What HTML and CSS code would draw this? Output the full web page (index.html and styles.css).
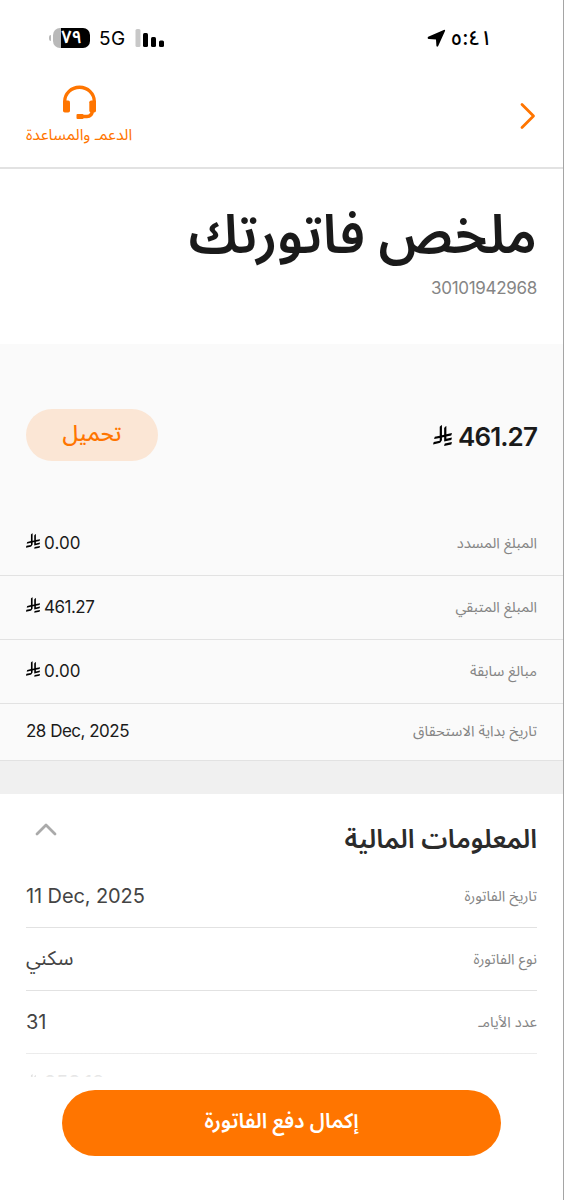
FILE: index.html
```html
<!DOCTYPE html>
<html lang="ar" dir="rtl">
<head>
    <meta charset="UTF-8">
    <meta name="viewport" content="width=device-width, initial-scale=1.0">
    <title>ملخص فاتورتك</title>
    <link rel="stylesheet" href="styles.css">
</head>
<body>
    <svg class="defs" width="0" height="0">
        <symbol id="riyal" viewBox="0 0 1124.14 1256.39">
            <path d="M699.62,1113.02c-20.06,44.48-33.32,92.75-38.4,143.37l424.51-90.24c20.06-44.47,33.31-92.75,38.4-143.37l-424.51,90.24Z"/>
            <path d="M1085.73,895.8c20.06-44.47,33.32-92.75,38.4-143.37l-330.68,70.33v-135.2l292.27-62.11c20.06-44.47,33.32-92.75,38.4-143.37l-330.68,70.27V66.13c-50.67,28.45-95.67,66.32-132.25,110.99v403.35l-132.25,28.11V0c-50.67,28.44-95.67,66.32-132.25,110.99v525.69l-295.91,62.88c-20.06,44.47-33.33,92.75-38.42,143.37l334.33-71.05v170.26l-358.3,76.14c-20.06,44.47-33.32,92.75-38.4,143.37l375.04-79.7c30.53-6.35,56.77-24.4,73.83-49.24l68.78-101.97v-.02c7.14-10.55,11.3-23.27,11.3-36.97v-149.98l132.25-28.11v270.4l424.53-90.28Z"/>
        </symbol>
    </svg>
    <div class="phone">
        <div class="status d-flex align-items-center justify-content-between">
            <div class="clock d-flex align-items-center">
                <span class="time">٥:٤١</span>
                <svg class="location" width="19" height="19" viewBox="0 0 19 19"><path d="M1.200 7.800 16.800 1q1.700-.6 1.200 1.100L11.200 17q-1.200 1.800-1.800-.3L9 10.400 2 10q-2.200-.6-.8-2.200z"/></svg>
            </div>
            <div class="signals d-flex align-items-center">
                <svg class="bars" width="30" height="20" viewBox="0 0 30 20">
                    <rect class="off" x="0.500" y="1" width="5" height="18" rx="1.500"/>
                    <rect x="8" y="5" width="5" height="14" rx="1.500"/>
                    <rect x="16" y="9" width="5" height="10" rx="1.500"/>
                    <rect x="24" y="12.500" width="5" height="6.500" rx="1.500"/>
                </svg>
                <span class="network">5G</span>
                <div class="battery-wrap d-flex align-items-center">
                    <span class="battery">٧٩</span>
                    <span class="battery-tip"></span>
                </div>
            </div>
        </div>
        <header class="topbar d-flex justify-content-between">
            <svg class="back" width="16" height="28" viewBox="0 0 16 28"><path d="M2 2.500 13.500 14 2 25.500"/></svg>
            <a class="support">
                <svg width="35" height="35" viewBox="0 0 35 35">
                    <path class="line" d="M2.700 18v-1.500a14.800 14.300 0 0 1 29.600 0V18"/>
                    <rect x="1" y="15.500" width="7" height="12" rx="1.800"/>
                    <rect x="27.300" y="15.500" width="6.700" height="12" rx="1.800"/>
                    <path class="line" d="M30.500 25.500q-.6 6-5.500 6h-5"/>
                    <rect x="14.500" y="29" width="7" height="5" rx="1"/>
                </svg>
                <span>الدعمـ والمساعدة</span>
            </a>
        </header>
        <section class="hero">
            <h1>ملخص فاتورتك</h1>
            <p class="account">30101942968</p>
        </section>
        <section class="summary">
            <div class="total d-flex align-items-center justify-content-between">
                <div class="amount"><svg><use href="#riyal"/></svg>461.27</div>
                <a class="download">تحميل</a>
            </div>
            <div class="item">
                <span class="label">المبلغ المسدد</span>
                <span class="value value-zero"><svg><use href="#riyal"/></svg>0.00</span>
            </div>
            <div class="item">
                <span class="label">المبلغ المتبقي</span>
                <span class="value"><svg><use href="#riyal"/></svg>461.27</span>
            </div>
            <div class="item">
                <span class="label">مبالغ سابقة</span>
                <span class="value value-zero"><svg><use href="#riyal"/></svg>0.00</span>
            </div>
            <div class="item item-date">
                <span class="label">تاريخ بداية الاستحقاق</span>
                <span class="value">28 Dec, 2025</span>
            </div>
        </section>
        <section class="details">
            <div class="details-title d-flex justify-content-between">
                <h2>المعلومات المالية</h2>
                <svg class="collapse" width="22" height="14" viewBox="0 0 22 14"><path d="M2 12 11 3l9 9"/></svg>
            </div>
            <div class="row">
                <span class="label">تاريخ الفاتورة</span>
                <span class="value">11 Dec, 2025</span>
            </div>
            <div class="row">
                <span class="label">نوع الفاتورة</span>
                <span class="value">سكني</span>
            </div>
            <div class="row">
                <span class="label">عدد الأيامـ</span>
                <span class="value">31</span>
            </div>
            <div class="row row-last">
                <span class="label"></span>
                <span class="value"><svg><use href="#riyal"/></svg>253.18</span>
            </div>
        </section>
        <footer class="pay-bar">
            <a class="pay">إكمال دفع الفاتورة</a>
        </footer>
    </div>
</body>
</html>
```
FILE: styles.css
```css
*{
    box-sizing: border-box;
    margin: 0px;
    padding: 0px;
}
.d-flex{
    display: flex;
}
.align-items-center{
    align-items: center;
}
.justify-content-between{
    justify-content: space-between;
}
body{
    font-family: Inter, "Noto Sans Arabic", "DejaVu Sans", sans-serif;
    background: #fff;
    color: #1a1a1a;
}
.defs{
    position: absolute;
}
.phone{
    position: relative;
    width: 564px;
    height: 1200px;
    overflow: hidden;
    border-right: 1px solid #a5a5a5;
}
.status{
    height: 76px;
    padding: 0 71px 0 49px;
    color: #000;
}
.clock{
    gap: 5px;
}
.time{
    font-size: 20.500px;
    font-weight: 500;
}
.signals{
    gap: 9px;
}
.bars .off{
    fill: #c8c8c8;
}
.network{
    font-size: 19px;
    font-weight: 400;
    letter-spacing: .5px;
}
.battery-wrap{
    gap: 2px;
}
.battery-tip{
    width: 2px;
    height: 6px;
    border-radius: 2px 0 0 2px;
    background: #b9b9b9;
}
.battery{
    width: 37px;
    height: 20px;
    border-radius: 7px;
    background: linear-gradient(to right, #b9b9b9 8px, #000 8px);
    color: #fff;
    font-size: 18px;
    font-weight: 600;
    line-height: 18px;
    text-align: center;
}
.topbar{
    height: 93px;
    padding: 9px 27px 0 26px;
    border-bottom: 2px solid #e2e2e2;
}
.back{
    margin-top: 17px;
}
.back path, .collapse path{
    fill: none;
    stroke: #ff7500;
    stroke-width: 2.800;
    stroke-linecap: round;
    stroke-linejoin: round;
}
.support{
    display: flex;
    flex-direction: column;
    align-items: center;
    gap: 4px;
    color: #ff7500;
    font-size: 15.700px;
}
.support span{
    line-height: 22px;
}
.support svg{
    fill: #ff7500;
}
.support .line{
    fill: none;
    stroke: #ff7500;
    stroke-width: 3.400;
}
.hero{
    height: 175px;
    padding: 27px 26px 0;
}
.hero h1{
    font-size: 53.800px;
    font-weight: 600;
    line-height: 76px;
}
.account{
    margin-top: 3px;
    color: #858585;
    font-size: 17px;
    letter-spacing: -.3px;
    line-height: 26px;
}
.summary{
    background: #fafafa;
}
.total{
    height: 168px;
    padding: 13px 26px 0;
}
.amount{
    direction: ltr;
    display: flex;
    align-items: center;
    gap: 6px;
    font-size: 26px;
    font-weight: 600;
    letter-spacing: -.9px;
    line-height: 32px;
    padding-top: 4px;
}
.amount svg{
    width: 19px;
    height: 21px;
    margin-bottom: 3px;
}
.download{
    display: flex;
    align-items: center;
    justify-content: center;
    width: 132px;
    height: 52px;
    border-radius: 26px;
    background: #fbe6d5;
    color: #ff7500;
    font-size: 22px;
    font-weight: 500;
    padding-bottom: 2px;
}
.item, .row{
    display: flex;
    align-items: center;
    justify-content: space-between;
    height: 64px;
    border-bottom: 1px solid #e2e2e2;
}
.item{
    padding: 0 26px 2px;
}
.item-date{
    height: 57px;
}
.label{
    color: #858585;
    font-size: 14.700px;
    line-height: 22px;
}
.value{
    direction: ltr;
    display: flex;
    align-items: center;
    gap: 4px;
    font-size: 17px;
    letter-spacing: -.5px;
}
.value-zero{
    letter-spacing: .1px;
}
.value svg{
    width: 14px;
    height: 16px;
    margin-bottom: 3px;
}
.details{
    border-top: 33px solid #f0f0f0;
    padding: 0 26px;
}
.details-title{
    height: 71px;
    padding: 23px 0 0 9px;
}
.details h2{
    color: #2b2b2b;
    font-size: 26.300px;
    font-weight: 600;
    line-height: 44px;
}
.collapse{
    margin-top: 5px;
}
.collapse path{
    stroke: #aaa;
}
.row{
    height: 63px;
}
.row .value{
    color: #444;
    font-size: 20px;
    letter-spacing: -.1px;
}
.row-last{
    height: 59px;
}
.pay-bar{
    position: absolute;
    left: 0;
    right: 0;
    bottom: 0;
    height: 160px;
    padding: 50px 62px 0;
    background: linear-gradient(rgba(255, 255, 255, 0), rgba(255, 255, 255, .9) 37px, #fff 37px);
}
.pay{
    display: flex;
    align-items: center;
    justify-content: center;
    height: 66px;
    border-radius: 33px;
    background: #ff7500;
    color: #fff;
    font-size: 20.900px;
    font-weight: 600;
    padding-bottom: 4px;
}
```
